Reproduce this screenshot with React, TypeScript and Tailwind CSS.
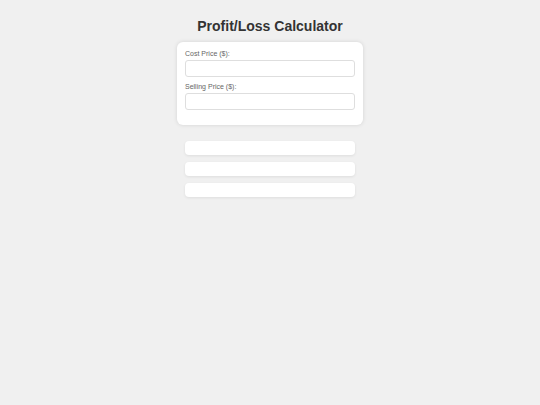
export default function App() {
  return (
    <div className="min-h-[405px] w-full bg-[#f0f0f0] font-['Liberation_Sans',Arial,sans-serif]">
      <div className="mx-auto flex w-[186px] flex-col items-center pt-[17px]">
        <h1 className="whitespace-nowrap text-[14px] font-bold leading-[18px] text-[#333]">Profit/Loss Calculator</h1>
        <div className="mt-[7px] w-full rounded-[6px] bg-white px-[8px] pb-[15px] pt-[7px] shadow-[0_0_4px_rgba(0,0,0,0.12)]">
          <label className="mb-[1px] block text-[7px] leading-[10px] text-[#666]">Cost Price ($):</label>
          <input className="mb-[5px] block h-[17px] w-full rounded-[3px] border border-[#dedede] bg-white outline-none" />
          <label className="mb-[1px] block text-[7px] leading-[10px] text-[#666]">Selling Price ($):</label>
          <input className="block h-[17px] w-full rounded-[3px] border border-[#dedede] bg-white outline-none" />
        </div>
        <div className="mt-[16px] flex w-[170px] flex-col gap-[7px]">
          <div className="h-[14px] rounded-[4px] bg-white shadow-[0_1px_3px_rgba(0,0,0,0.08)]" />
          <div className="h-[14px] rounded-[4px] bg-white shadow-[0_1px_3px_rgba(0,0,0,0.08)]" />
          <div className="h-[14px] rounded-[4px] bg-white shadow-[0_1px_3px_rgba(0,0,0,0.08)]" />
        </div>
      </div>
    </div>
  );
}
